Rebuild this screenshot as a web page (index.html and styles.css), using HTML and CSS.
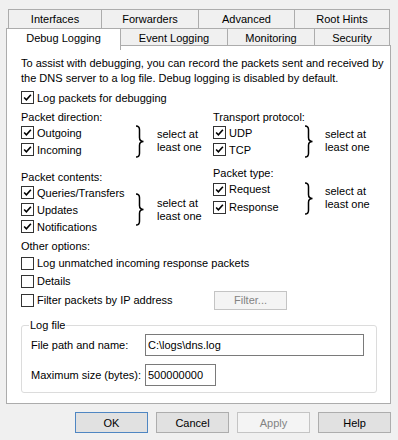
FILE: index.html
```html
<!DOCTYPE html>
<html lang="en">
<head>
    <meta charset="UTF-8">
    <title>DNS Server Properties - Debug Logging</title>
    <link rel="stylesheet" href="styles.css">
</head>
<body>
    <div class="dialog">
        <!-- Tabs -->
        <div class="tab-row back">
            <div class="tab">Interfaces</div>
            <div class="tab">Forwarders</div>
            <div class="tab">Advanced</div>
            <div class="tab">Root Hints</div>
        </div>
        <div class="tab-row front">
            <div class="tab selected">Debug Logging</div>
            <div class="tab">Event Logging</div>
            <div class="tab">Monitoring</div>
            <div class="tab">Security</div>
        </div>

        <!-- Tab page -->
        <div class="panel">
            <p class="intro">To assist with debugging, you can record the packets sent and received by the DNS server to a log file. Debug logging is disabled by default.</p>

            <label class="row"><span class="box checked"><svg viewBox="0 0 13 13"><path d="M2.5 6.5 L5.2 9.2 L10.5 3.2"/></svg></span>Log packets for debugging</label>

            <div class="columns">
                <div class="col left">
                    <div class="caption">Packet direction:</div>
                    <div class="group">
                        <div class="list">
                            <label class="row"><span class="box checked"><svg viewBox="0 0 13 13"><path d="M2.5 6.5 L5.2 9.2 L10.5 3.2"/></svg></span>Outgoing</label>
                            <label class="row"><span class="box checked"><svg viewBox="0 0 13 13"><path d="M2.5 6.5 L5.2 9.2 L10.5 3.2"/></svg></span>Incoming</label>
                        </div>
                        <svg class="brace" viewBox="0 0 10 34" preserveAspectRatio="none"><path d="M1 1 Q4.5 1 4.5 5 L4.5 13 Q4.5 17 8.5 17 Q4.5 17 4.5 21 L4.5 29 Q4.5 33 1 33"/></svg>
                        <div class="note">select at<br>least one</div>
                    </div>

                    <div class="caption second">Packet contents:</div>
                    <div class="group">
                        <div class="list">
                            <label class="row"><span class="box checked"><svg viewBox="0 0 13 13"><path d="M2.5 6.5 L5.2 9.2 L10.5 3.2"/></svg></span>Queries/Transfers</label>
                            <label class="row"><span class="box checked"><svg viewBox="0 0 13 13"><path d="M2.5 6.5 L5.2 9.2 L10.5 3.2"/></svg></span>Updates</label>
                            <label class="row"><span class="box checked"><svg viewBox="0 0 13 13"><path d="M2.5 6.5 L5.2 9.2 L10.5 3.2"/></svg></span>Notifications</label>
                        </div>
                        <svg class="brace" viewBox="0 0 10 34" preserveAspectRatio="none"><path d="M1 1 Q4.5 1 4.5 5 L4.5 13 Q4.5 17 8.5 17 Q4.5 17 4.5 21 L4.5 29 Q4.5 33 1 33"/></svg>
                        <div class="note">select at<br>least one</div>
                    </div>
                </div>

                <div class="col right">
                    <div class="caption">Transport protocol:</div>
                    <div class="group">
                        <div class="list">
                            <label class="row"><span class="box checked"><svg viewBox="0 0 13 13"><path d="M2.5 6.5 L5.2 9.2 L10.5 3.2"/></svg></span>UDP</label>
                            <label class="row"><span class="box checked"><svg viewBox="0 0 13 13"><path d="M2.5 6.5 L5.2 9.2 L10.5 3.2"/></svg></span>TCP</label>
                        </div>
                        <svg class="brace" viewBox="0 0 10 34" preserveAspectRatio="none"><path d="M1 1 Q4.5 1 4.5 5 L4.5 13 Q4.5 17 8.5 17 Q4.5 17 4.5 21 L4.5 29 Q4.5 33 1 33"/></svg>
                        <div class="note">select at<br>least one</div>
                    </div>

                    <div class="caption third">Packet type:</div>
                    <div class="group tall">
                        <div class="list">
                            <label class="row"><span class="box checked"><svg viewBox="0 0 13 13"><path d="M2.5 6.5 L5.2 9.2 L10.5 3.2"/></svg></span>Request</label>
                            <label class="row"><span class="box checked"><svg viewBox="0 0 13 13"><path d="M2.5 6.5 L5.2 9.2 L10.5 3.2"/></svg></span>Response</label>
                        </div>
                        <svg class="brace" viewBox="0 0 10 34" preserveAspectRatio="none"><path d="M1 1 Q4.5 1 4.5 5 L4.5 13 Q4.5 17 8.5 17 Q4.5 17 4.5 21 L4.5 29 Q4.5 33 1 33"/></svg>
                        <div class="note">select at<br>least one</div>
                    </div>
                </div>
            </div>

            <div class="caption other">Other options:</div>
            <label class="row opt"><span class="box"></span>Log unmatched incoming response packets</label>
            <label class="row opt"><span class="box"></span>Details</label>
            <div class="row opt filter-row">
                <label class="filter-label"><span class="box"></span>Filter packets by IP address</label>
                <button class="btn small" disabled>Filter...</button>
            </div>

            <fieldset class="log-file">
                <legend>Log file</legend>
                <div class="field">
                    <span class="field-label">File path and name:</span>
                    <input type="text" class="path" value="C:\logs\dns.log">
                </div>
                <div class="field">
                    <span class="field-label">Maximum size (bytes):</span>
                    <input type="text" class="size" value="500000000">
                </div>
            </fieldset>
        </div>

        <!-- Dialog buttons -->
        <div class="buttons">
            <button class="btn default">OK</button>
            <button class="btn">Cancel</button>
            <button class="btn" disabled>Apply</button>
            <button class="btn">Help</button>
        </div>
    </div>
</body>
</html>
```

FILE: styles.css
```css
body {
    margin: 0;
    background-color: #f0f0f0;
    font-family: "Liberation Sans", Arial, sans-serif;
    font-size: 11px;
    color: #000;
}
.dialog {
    width: 398px;
    height: 440px;
    padding-top: 9px;
    box-sizing: border-box;
}

/* tabs */
.tab-row {
    display: grid;
    height: 19px;
}
.tab-row.back {
    margin-left: 8px;
    grid-template-columns: 93px 97px 96px 96px;
}
.tab-row.front {
    margin-left: 6px;
    height: 17px;
    align-items: end;
    grid-template-columns: 115px 106px 87px 76px;
}
.tab {
    box-sizing: border-box;
    height: 100%;
    border: 1px solid #acacac;
    border-bottom: none;
    border-right: none;
    background-color: #f0f0f0;
    display: flex;
    align-items: center;
    justify-content: center;
}
.tab-row.back .tab {
    padding-bottom: 1px;
}
.tab-row.front .tab {
    padding-bottom: 2px;
}
.tab:last-child {
    border-right: 1px solid #acacac;
}
.tab-row.front .tab.selected {
    position: relative;
    z-index: 2;
    height: 22px;
    margin-bottom: -1px;
    background-color: #fff;
    border-right: 1px solid #acacac;
    padding-bottom: 4px;
}
.tab.selected + .tab {
    border-left: none;
}

/* tab page */
.panel {
    position: relative;
    z-index: 1;
    margin: 0 7px 0 6px;
    height: 359px;
    box-sizing: border-box;
    border: 1px solid #acacac;
    background-color: #fff;
    padding: 10px 13px 0 14px;
}
.intro {
    margin: 0 -13px 0 0;
    line-height: 15px;
}
.row {
    display: flex;
    align-items: center;
    height: 17px;
}
.box {
    box-sizing: border-box;
    width: 13px;
    height: 13px;
    border: 1px solid #333;
    background-color: #fff;
    margin-right: 3px;
    flex: none;
}
.box svg {
    display: block;
    width: 11px;
    height: 11px;
}
.box svg path {
    fill: none;
    stroke: #000;
    stroke-width: 1.9;
}
.panel > .row:first-of-type {
    margin-top: 3px;
}

.columns {
    display: flex;
    margin-top: 4px;
}
.col.left { width: 192px; }
.caption {
    height: 14px;
    line-height: 14px;
}
.caption.second { margin-top: 12px; }
.caption.third { margin-top: 8px; }
.group {
    display: flex;
    align-items: center;
}
.left .list { width: 114px; }
.right .list { width: 91px; }
.group.tall .row { height: 18px; }
.brace {
    width: 10px;
    height: 33px;
    flex: none;
}
.brace path {
    fill: none;
    stroke: #000;
    stroke-width: 1.5;
}
.note {
    margin-left: 12px;
    line-height: 13px;
}
.right .note { margin-left: 11px; }

.caption.other {
    margin-top: 4px;
    height: 15px;
    line-height: 15px;
}
.row.opt { height: 18px; }
.row.filter-row { height: 20px; }
.filter-label {
    display: flex;
    align-items: center;
    width: 193px;
}

/* buttons */
.btn {
    box-sizing: border-box;
    font-family: inherit;
    font-size: 11px;
    width: 73px;
    height: 21px;
    padding: 0;
    border: 1px solid #adadad;
    background-color: #e1e1e1;
    color: #000;
}
.btn.default {
    border-color: #4f86c2;
}
.btn:disabled {
    background-color: #f4f4f4;
    border-color: #c4c4c4;
    color: #838383;
}
.btn.small {
    height: 19px;
}

/* log file group */
.log-file {
    margin: 8px 0 0 0;
    padding: 1px 9px 6px 9px;
    border: 1px solid #dcdcdc;
    border-radius: 3px;
}
.log-file legend {
    padding: 0 1px;
    margin-left: -2px;
    line-height: 15px;
}
.field {
    display: flex;
    align-items: center;
}
.field + .field { margin-top: 8px; }
.field-label { width: 114px; }
input[type="text"] {
    box-sizing: border-box;
    font-family: inherit;
    font-size: 11px;
    height: 22px;
    border: 1px solid #7a7a7a;
    padding: 0 2px;
    margin: 0;
    outline: none;
}
.path { width: 219px; }
.size { width: 71px; height: 21px; }

.buttons {
    display: flex;
    justify-content: flex-end;
    gap: 8px;
    margin-top: 8px;
    padding-right: 7px;
}
```
